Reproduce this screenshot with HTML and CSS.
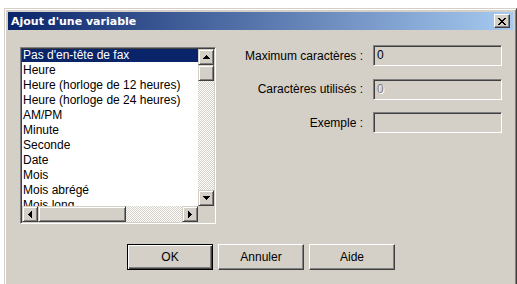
FILE: index.html
```html
<!DOCTYPE html>
<html lang="fr">
<head>
<meta charset="utf-8">
<title>Ajout d'une variable</title>
<link rel="stylesheet" href="styles.css">
</head>
<body>
<div class="window">
  <div class="titlebar">
    <span class="title">Ajout d'une variable</span>
    <button class="close" aria-label="Fermer"><svg width="8" height="7" viewBox="0 0 8 7" shape-rendering="crispEdges"><path d="M0 0h2v1h-2z M6 0h2v1h-2z M1 1h2v1h-2z M5 1h2v1h-2z M2 2h4v1h-4z M3 3h2v1h-2z M2 4h4v1h-4z M1 5h2v1h-2z M5 5h2v1h-2z M0 6h2v1h-2z M6 6h2v1h-2z" fill="#000"/></svg></button>
  </div>
  <div class="content">
    <div class="main">
      <div class="listbox">
        <ul class="items">
          <li class="selected">Pas d'en-tête de fax</li>
          <li>Heure</li>
          <li>Heure (horloge de 12 heures)</li>
          <li>Heure (horloge de 24 heures)</li>
          <li>AM/PM</li>
          <li>Minute</li>
          <li>Seconde</li>
          <li>Date</li>
          <li>Mois</li>
          <li>Mois abrégé</li>
          <li>Mois long</li>
        </ul>
        <div class="vscroll">
          <div class="sbtn"><svg width="7" height="4" viewBox="0 0 7 4" shape-rendering="crispEdges"><path d="M3 0h1v1h-1z M2 1h3v1h-3z M1 2h5v1h-5z M0 3h7v1h-7z" fill="#000"/></svg></div>
          <div class="thumb"></div>
          <div class="track"></div>
          <div class="sbtn"><svg width="7" height="4" viewBox="0 0 7 4" shape-rendering="crispEdges"><path d="M0 0h7v1h-7z M1 1h5v1h-5z M2 2h3v1h-3z M3 3h1v1h-1z" fill="#000"/></svg></div>
        </div>
        <div class="hscroll">
          <div class="sbtn"><svg width="4" height="7" viewBox="0 0 4 7" shape-rendering="crispEdges"><path d="M3 0h1v7h-1z M2 1h1v5h-1z M1 2h1v3h-1z M0 3h1v1h-1z" fill="#000"/></svg></div>
          <div class="thumb hthumb"></div>
          <div class="track"></div>
          <div class="sbtn"><svg width="4" height="7" viewBox="0 0 4 7" shape-rendering="crispEdges"><path d="M0 0h1v7h-1z M1 1h1v5h-1z M2 2h1v3h-1z M3 3h1v1h-1z" fill="#000"/></svg></div>
        </div>
        <div class="corner"></div>
      </div>
      <div class="fields">
        <div class="field-row"><label>Maximum caractères :</label><div class="edit">0</div></div>
        <div class="field-row"><label>Caractères utilisés :</label><div class="edit disabled">0</div></div>
        <div class="field-row"><label>Exemple :</label><div class="edit"></div></div>
      </div>
    </div>
    <div class="buttons">
      <button class="btn default">OK</button>
      <button class="btn">Annuler</button>
      <button class="btn">Aide</button>
    </div>
  </div>
</div>
</body>
</html>
```
FILE: styles.css
```css
* { box-sizing: border-box; }
html, body { margin: 0; padding: 0; background: #fff; overflow: hidden; }
body { font-family: "Liberation Sans", Arial, sans-serif; font-size: 12px; color: #000; }

.window {
  margin: 8px 0 0 4px;
  width: 513px;
  height: 300px;
  background: #d4d0c8;
  border: 1px solid;
  border-color: #d4d0c8 #404040 #404040 #d4d0c8;
  box-shadow: inset 1px 1px #fff, inset -1px -1px #808080;
  padding: 3px;
  display: flex;
  flex-direction: column;
}

.titlebar {
  height: 18px;
  background: linear-gradient(to right, #0a246a, #a6caf0);
  display: flex;
  align-items: center;
  justify-content: space-between;
  padding: 0 3px 0 3px;
}
.title { font-family: "DejaVu Sans", sans-serif; font-weight: bold; font-size: 11px; color: #fff; }
.close {
  width: 16px; height: 14px; padding: 0; margin: 0;
  background: #d4d0c8;
  border: 1px solid; border-color: #fff #404040 #404040 #fff;
  box-shadow: inset -1px -1px #808080;
  display: flex; align-items: center; justify-content: center;
}

.content { padding: 15px 11px 0 12px; }
.main { display: flex; align-items: flex-start; }

.listbox {
  margin-top: 2px;
  width: 196px; height: 177px;
  border: 1px solid; border-color: #808080 #fff #fff #808080;
  box-shadow: inset 1px 1px #404040, inset -1px -1px #d4d0c8;
  padding: 1px;
  background: #fff;
  display: grid;
  grid-template-columns: 176px 16px;
  grid-template-rows: 157px 16px;
}
.items { list-style: none; margin: 0; padding: 0; overflow: hidden; }
.items li { height: 13px; line-height: 13px; margin-bottom: 2px; padding-left: 1px; white-space: nowrap; }
.items li.selected { background: #0a246a; color: #fff; }

.vscroll { display: flex; flex-direction: column; }
.hscroll { display: flex; }
.sbtn, .thumb {
  width: 16px; height: 16px; flex: none;
  background: #d4d0c8;
  border: 1px solid; border-color: #d4d0c8 #404040 #404040 #d4d0c8;
  box-shadow: inset 1px 1px #fff, inset -1px -1px #808080;
  display: flex; align-items: center; justify-content: center;
}
.hthumb { width: 88px; }
.track {
  flex: 1;
  background: repeating-conic-gradient(#fff 0 25%, #d4d0c8 0 50%) 0 0 / 2px 2px;
}
.corner { background: #d4d0c8; }

.fields { flex: 1; display: flex; flex-direction: column; gap: 12.5px; }
.field-row { height: 21px; display: flex; align-items: center; justify-content: flex-end; gap: 10px; }
.edit {
  width: 129px; height: 21px;
  border: 1px solid; border-color: #808080 #fff #fff #808080;
  box-shadow: inset 1px 1px #404040, inset -1px -1px #d4d0c8;
  background: #d4d0c8;
  padding: 1px 3px;
  line-height: 17px;
}
.edit.disabled { color: #808080; text-shadow: 1px 1px #fff; }

.buttons { margin-top: 20px; display: flex; justify-content: center; gap: 5px; }
.btn {
  width: 86px; height: 26px; padding: 0; margin: 0;
  font-family: "Liberation Sans", Arial, sans-serif; font-size: 12px; color: #000;
  background: #d4d0c8;
  border: 1px solid; border-color: #fff #404040 #404040 #fff;
  box-shadow: inset -1px -1px #808080, inset 1px 1px #d4d0c8;
}
.btn.default {
  border-color: #000;
  box-shadow: inset 1px 1px #fff, inset -1px -1px #404040, inset -2px -2px #808080;
}
```
